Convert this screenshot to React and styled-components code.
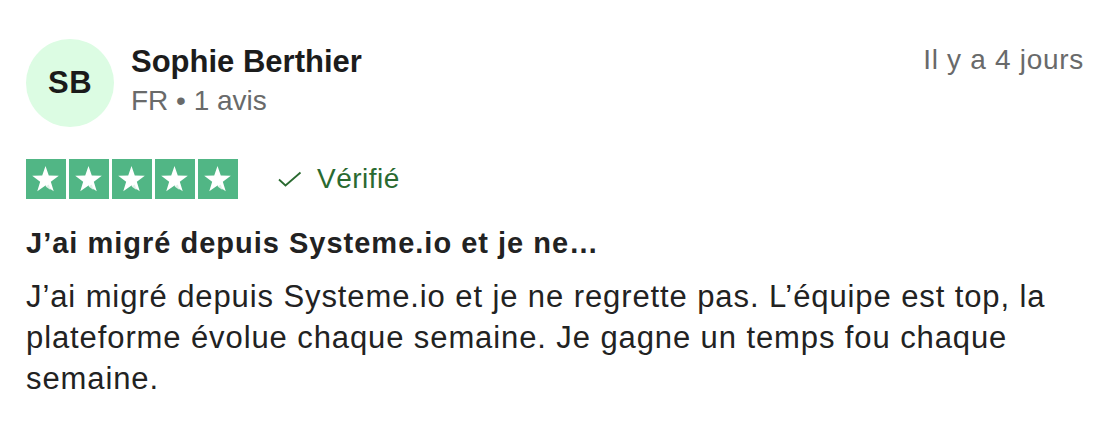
import React from 'react';
import styled, { createGlobalStyle } from 'styled-components';

const GlobalStyle = createGlobalStyle`
  body {
    margin: 0;
    background: #ffffff;
    font-family: 'Liberation Sans', Arial, Helvetica, sans-serif;
    color: #1c1c1c;
  }
`;

const Card = styled.article`
  padding: 39px 34px 0 26px;
`;

const Header = styled.header`
  display: flex;
  justify-content: space-between;
  align-items: flex-start;
`;

const Consumer = styled.div`
  display: flex;
  gap: 17px;
`;

const Avatar = styled.div`
  width: 88px;
  height: 88px;
  border-radius: 50%;
  background: #dcfce3;
  display: flex;
  align-items: center;
  justify-content: center;
  font-size: 31px;
  letter-spacing: 0.5px;
  font-weight: 700;
  color: #1a1a1a;
`;

const Info = styled.div`
  display: flex;
  flex-direction: column;
  padding-top: 5px;
`;

const Name = styled.div`
  font-size: 31px;
  line-height: 36px;
  font-weight: 700;
  color: #1c1c1c;
`;

const Meta = styled.div`
  margin-top: 4px;
  font-size: 28px;
  line-height: 34px;
  color: #696a6a;
`;

const Date = styled.time`
  margin-top: 4px;
  font-size: 28px;
  line-height: 34px;
  letter-spacing: 0.7px;
  color: #696a6a;
`;

const RatingRow = styled.div`
  display: flex;
  align-items: center;
  margin-top: 32px;
`;

const Stars = styled.div`
  display: flex;
  gap: 3px;
`;

const StarBox = styled.div`
  width: 40px;
  height: 40px;
  background: #51b685;
  display: flex;
`;

const Verified = styled.div`
  display: flex;
  align-items: center;
  gap: 15px;
  margin-left: 40px;
  font-size: 28px;
  letter-spacing: 0.5px;
  color: #2a6a30;
`;

const Title = styled.h2`
  margin: 26px 0 0;
  font-size: 29px;
  line-height: 36px;
  letter-spacing: 1px;
  font-weight: 700;
  color: #222222;
`;

const Body = styled.p`
  margin: 15px 0 0;
  font-size: 31px;
  line-height: 41px;
  letter-spacing: 0.9px;
  color: #222222;
`;

const starPoints = (cx, cy, r, ir) => {
  const pts = [];
  for (let i = 0; i < 10; i++) {
    const rad = i % 2 === 0 ? r : ir;
    const a = -Math.PI / 2 + (i * Math.PI) / 5;
    pts.push(`${(cx + rad * Math.cos(a)).toFixed(2)},${(cy + rad * Math.sin(a)).toFixed(2)}`);
  }
  return pts.join(' ');
};

const Star = () => (
  <StarBox>
    <svg width="40" height="40" viewBox="0 0 40 40">
      <polygon points={starPoints(19.5, 21, 14, 5.6)} fill="#ffffff" />
      <polygon points="22.8,25.5 24.6,31 19.5,27.4" fill="#dff1e7" />
    </svg>
  </StarBox>
);

const Check = () => (
  <svg width="24" height="16" viewBox="0 0 24 16" fill="none">
    <path d="M1 8.5 L7.5 14.5 L22.5 1.5" stroke="#2a6a30" strokeWidth="1.8" />
  </svg>
);

export default function App() {
  return (
    <>
      <GlobalStyle />
      <Card>
        <Header>
          <Consumer>
            <Avatar>SB</Avatar>
            <Info>
              <Name>Sophie Berthier</Name>
              <Meta>FR • 1 avis</Meta>
            </Info>
          </Consumer>
          <Date>Il y a 4 jours</Date>
        </Header>
        <RatingRow>
          <Stars>
            {[1, 2, 3, 4, 5].map((n) => (
              <Star key={n} />
            ))}
          </Stars>
          <Verified>
            <Check />
            Vérifié
          </Verified>
        </RatingRow>
        <Title>J’ai migré depuis Systeme.io et je ne…</Title>
        <Body>
          J’ai migré depuis Systeme.io et je ne regrette pas. L’équipe est top, la
          plateforme évolue chaque semaine. Je gagne un temps fou chaque semaine.
        </Body>
      </Card>
    </>
  );
}
